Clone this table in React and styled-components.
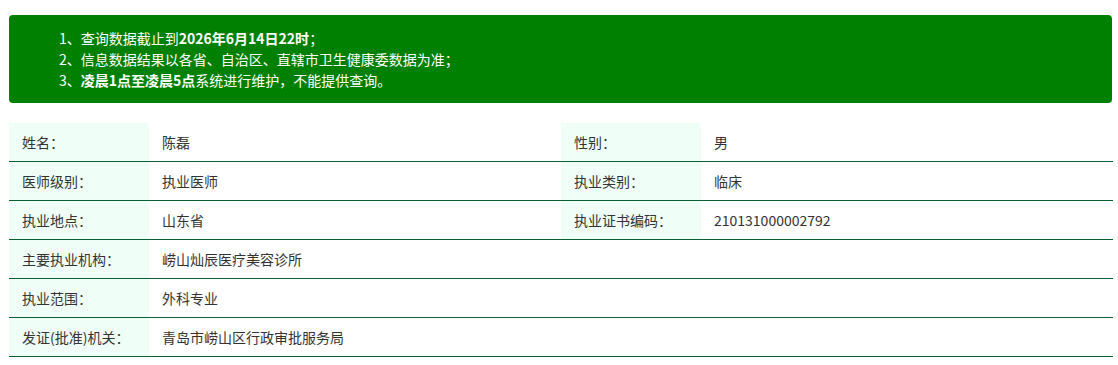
import React from 'react';
import styled, { createGlobalStyle } from 'styled-components';

const GlobalStyle = createGlobalStyle`
  body {
    margin: 0;
    background: #fff;
    font-family: "Noto Sans CJK SC", sans-serif;
  }
`;

const Page = styled.div`
  padding: 15px 5px 0 9px;
  display: flex;
  flex-direction: column;
  gap: 20px;
`;

const Notice = styled.ul`
  margin: 0 1px 0 0;
  list-style: none;
  background-color: #008000;
  border-radius: 4px;
  padding: 13px 16px 12px 50px;
  color: #fff;
  font-size: 14px;
  line-height: 21px;
  font-family: "Noto Sans CJK SC", sans-serif;
`;

const NoticeItem = styled.li`
  white-space: nowrap;
`;

const Strong = styled.b`
  font-weight: 700;
`;

const Table = styled.div`
  display: flex;
  flex-direction: column;
`;

const Row = styled.div`
  display: grid;
  grid-template-columns: 140px 412px 140px 1fr;
  border-bottom: 1px solid #0b5e34;
`;

const Label = styled.div`
  background-color: #effff7;
  height: 38px;
  padding-left: 13px;
  display: flex;
  align-items: center;
  font-size: 14px;
  color: #333;
  font-family: "Noto Sans CJK SC", sans-serif;
`;

const Value = styled.div`
  height: 38px;
  padding-left: 13px;
  display: flex;
  align-items: center;
  font-size: 14px;
  color: #333;
  font-family: "Noto Sans CJK SC", sans-serif;
  grid-column: ${p => (p.$wide ? 'span 3' : 'auto')};
`;

const rows = [
  [['姓名：', '陈磊'], ['性别：', '男']],
  [['医师级别：', '执业医师'], ['执业类别：', '临床']],
  [['执业地点：', '山东省'], ['执业证书编码：', '210131000002792']],
  [['主要执业机构：', '崂山灿辰医疗美容诊所']],
  [['执业范围：', '外科专业']],
  [['发证(批准)机关：', '青岛市崂山区行政审批服务局']],
];

export default function App() {
  return (
    <>
      <GlobalStyle />
      <Page>
        <Notice>
          <NoticeItem>1、查询数据截止到<Strong>2026年6月14日22时</Strong>；</NoticeItem>
          <NoticeItem>2、信息数据结果以各省、自治区、直辖市卫生健康委数据为准；</NoticeItem>
          <NoticeItem>3、<Strong>凌晨1点至凌晨5点</Strong>系统进行维护，不能提供查询。</NoticeItem>
        </Notice>
        <Table>
          {rows.map((cells, i) => (
            <Row key={i}>
              {cells.map(([label, value]) => (
                <React.Fragment key={label}>
                  <Label>{label}</Label>
                  <Value $wide={cells.length === 1}>{value}</Value>
                </React.Fragment>
              ))}
            </Row>
          ))}
        </Table>
      </Page>
    </>
  );
}
